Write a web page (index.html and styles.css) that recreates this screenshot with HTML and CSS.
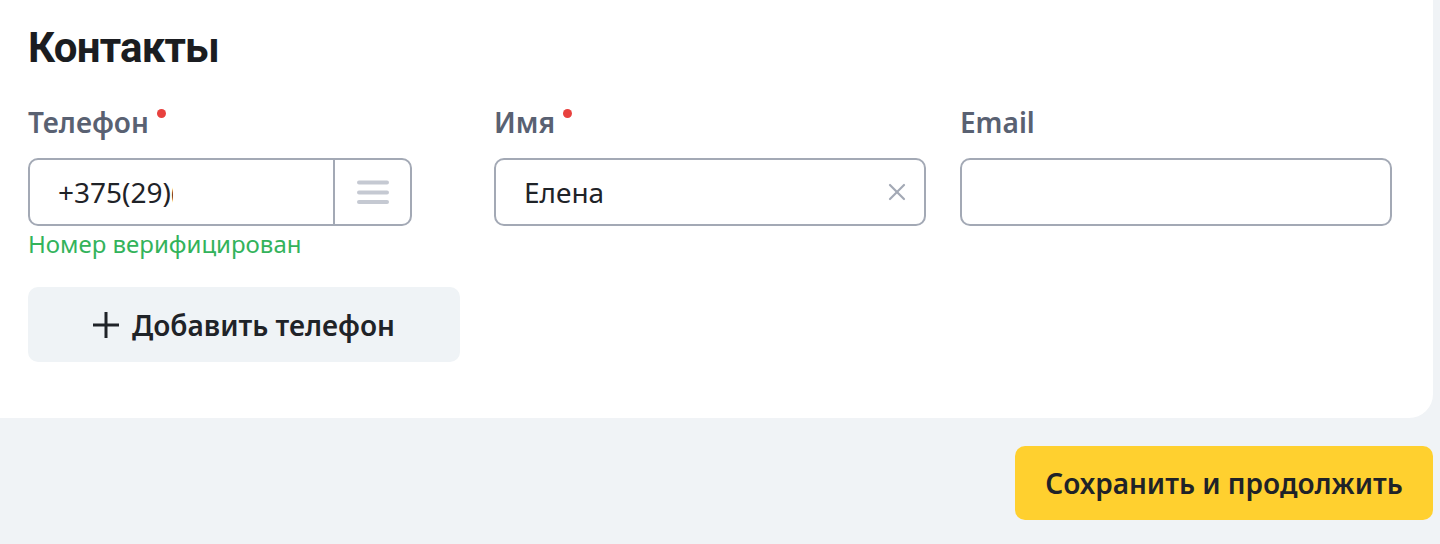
FILE: index.html
```html
<!DOCTYPE html>
<html lang="ru">
<head>
<meta charset="utf-8">
<title>Контакты</title>
<link rel="stylesheet" href="styles.css">
</head>
<body>
<div class="page">
  <section class="card">
    <h2 class="title">Контакты</h2>
    <div class="fields">
      <div class="field">
        <div class="label">Телефон<span class="req"></span></div>
        <div class="input phone">
          <div class="phone-value"><span class="phone-text">+375(29)(00)000-00-00</span></div>
          <button class="phone-menu" type="button" aria-label="Меню">
            <svg width="32" height="24" viewBox="0 0 32 24"><g stroke="#c5c9d2" stroke-width="4" stroke-linecap="round"><path d="M2 2.5H30"/><path d="M2 12.5H30"/><path d="M2 22H30"/></g></svg>
          </button>
        </div>
        <div class="hint">Номер верифицирован</div>
      </div>
      <div class="field">
        <div class="label">Имя<span class="req"></span></div>
        <div class="input name">
          <span class="value">Елена</span>
          <svg class="clear" width="18" height="18" viewBox="0 0 18 18"><g stroke="#a3a9b5" stroke-width="2.2" stroke-linecap="round"><path d="M2 2L16 16"/><path d="M16 2L2 16"/></g></svg>
        </div>
      </div>
      <div class="field">
        <div class="label">Email</div>
        <div class="input email"></div>
      </div>
    </div>
    <button class="add-btn" type="button">
      <svg width="26" height="26" viewBox="0 0 26 26"><g stroke="#1f2328" stroke-width="3"><path d="M13 0V26"/><path d="M0 13H26"/></g></svg>
      <span>Добавить телефон</span>
    </button>
  </section>
  <div class="actions">
    <button class="save-btn" type="button">Сохранить и продолжить</button>
  </div>
</div>
</body>
</html>
```

FILE: styles.css
```css
* { box-sizing: border-box; }
html, body { margin: 0; padding: 0; }
body {
  background: #f0f3f6;
  font-family: "Noto Sans", "Open Sans", sans-serif;
  color: #1f2328;
}
.page {
  width: 1433px;
}
.card {
  background: #ffffff;
  border-radius: 0 0 24px 0;
  padding: 23px 28px 56px;
}
.title {
  margin: 0;
  font-family: Roboto, "Noto Sans", sans-serif;
  font-size: 42px;
  line-height: 50px;
  font-weight: 700;
  letter-spacing: -0.8px;
  color: #1b1d21;
}
.fields {
  display: grid;
  grid-template-columns: 432px 432px 432px;
  column-gap: 34px;
  margin-top: 31px;
  align-items: start;
}
.label {
  font-size: 28px;
  line-height: 36px;
  font-weight: 600;
  color: #596172;
  display: flex;
  align-items: flex-start;
}
.req {
  width: 9px;
  height: 9px;
  border-radius: 50%;
  background: #e8413e;
  margin-left: 8px;
  margin-top: 5px;
}
.input {
  margin-top: 18px;
  height: 68px;
  border: 2px solid #a3a9b5;
  border-radius: 10px;
  background: #fff;
  display: flex;
  align-items: center;
  font-size: 28px;
  color: #1f2328;
}
.phone {
  width: 384px;
}
.phone-value {
  flex: 1;
  padding-left: 28px;
  display: flex;
  align-items: center;
  height: 100%;
}
.phone-text {
  display: block;
  width: 115px;
  overflow: hidden;
  white-space: nowrap;
}
.phone-menu {
  width: 77px;
  height: 100%;
  border: 0;
  border-left: 2px solid #a3a9b5;
  background: transparent;
  padding: 0;
  display: flex;
  align-items: center;
  justify-content: center;
}
.name {
  padding: 0 18px 0 28px;
  justify-content: space-between;
}
.hint {
  margin-top: 3px;
  font-size: 24px;
  line-height: 30px;
  color: #33b35b;
}
.add-btn {
  margin-top: 28px;
  width: 432px;
  height: 75px;
  border: 0;
  border-radius: 10px;
  background: #eff3f6;
  display: flex;
  align-items: center;
  justify-content: center;
  gap: 13px;
  font-family: inherit;
  font-size: 28px;
  font-weight: 600;
  color: #1f2328;
  padding: 0;
}
.actions {
  display: flex;
  justify-content: flex-end;
  margin-top: 28px;
}
.save-btn {
  width: 418px;
  height: 74px;
  border: 0;
  border-radius: 10px;
  background: #ffd02f;
  font-family: inherit;
  font-size: 28px;
  font-weight: 600;
  color: #1f2328;
  padding: 0;
}
```
